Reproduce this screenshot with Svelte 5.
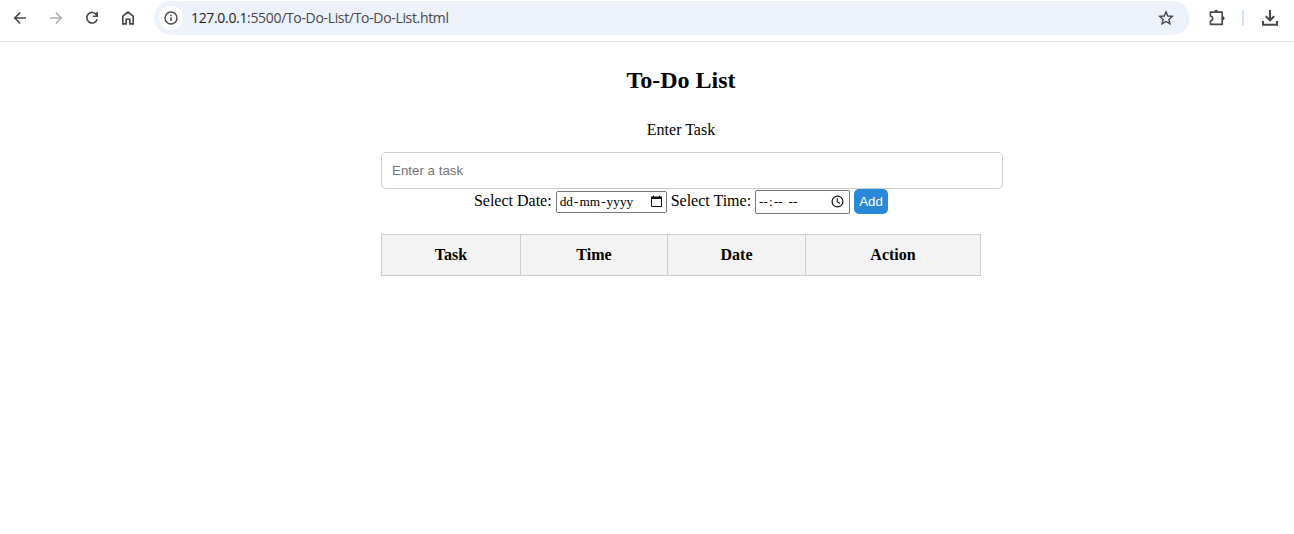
<script>
  const columns = [
    { name: 'Task', width: 139 },
    { name: 'Time', width: 147 },
    { name: 'Date', width: 138 },
    { name: 'Action', width: 175 }
  ];
  let task = $state('');
</script>

<div class="page">
  <header class="toolbar">
    <nav>
      <svg viewBox="0 0 16 16"><path d="M14 8H3M8.2 2.5 2.7 8l5.5 5.5" /></svg>
      <svg class="disabled" viewBox="0 0 16 16"><path d="M2 8h11M7.8 2.5 13.3 8l-5.5 5.5" /></svg>
      <svg viewBox="0 0 16 16"><path d="M12.7 5A5.3 5.3 0 1 0 13.2 9.3M13.2 2v4.2H9" /></svg>
      <svg viewBox="0 0 16 16"><path d="M2.8 6.1 8 2.1l5.2 4v7.8H9.8V9.2H6.2v4.7H2.8Z" /></svg>
    </nav>
    <div class="address">
      <span class="info">
        <svg viewBox="0 0 16 16"><circle cx="8" cy="8" r="6" stroke-width="1.4" /><path d="M8 7.3v3.8M8 4.8v1.5" stroke-width="1.5" /></svg>
      </span>
      <span class="url"><b>127.0.0.1</b>:5500/To-Do-List/To-Do-List.html</span>
      <svg class="star" viewBox="0 0 16 16"><path d="m8 1.9 1.8 4.1 4.5.4-3.4 3 1 4.4L8 11.5l-3.9 2.3 1-4.4-3.4-3 4.5-.4Z" stroke-width="1.4" /></svg>
    </div>
    <svg class="puzzle" viewBox="0 0 18 18"><path d="M2.4 3.1h11.8v12.3H2.4V12c3.1-.5 3.1-4.4 0-5Z" stroke-linejoin="round" /><path d="M6.2 2.7a2 2 0 0 1 4 0ZM14.6 7.3a2 2 0 0 1 0 4Z" fill="#474747" stroke="none" /></svg>
    <span class="divider"></span>
    <svg class="download" viewBox="0 0 18 18"><path d="M9 1v10M4.8 7.2 9 11.4l4.2-4.2M2 12v3.8h14V12" stroke-width="2" /></svg>
  </header>

  <main>
    <h2>To-Do List</h2>
    <label class="task-label" for="task">Enter Task</label>
    <input id="task" type="text" placeholder="Enter a task" bind:value={task} />
    <div class="controls">
      <span class="caption">Select Date:</span>
      <div class="field date">
        <span class="parts"><i>dd</i><u>-</u><i>mm</i><u>-</u><i>yyyy</i></span>
        <svg viewBox="0 0 13 13"><path d="M1.5 2.5h10v9h-10Z" stroke-width="1" /><path d="M1 1.5h11V4H1ZM3 .5h1v1H3ZM9 .5h1v1H9Z" fill="#111" stroke="none" /></svg>
      </div>
      <span class="caption">Select Time:</span>
      <div class="field time">
        <span class="parts"><i>--</i><u>:</u><i>--</i><u class="space"></u><i>--</i></span>
        <svg viewBox="0 0 13 13"><circle cx="6.5" cy="6.5" r="5.4" stroke-width="1.2" /><path d="M6.3 3.2v3.6l2.6 1.7" stroke-width="1.1" /></svg>
      </div>
      <button type="button">Add</button>
    </div>
    <table>
      <thead>
        <tr>
          {#each columns as column}
            <th style="width: {column.width}px">{column.name}</th>
          {/each}
        </tr>
      </thead>
    </table>
  </main>
</div>

<style>
  .page {
    height: 534px;
    overflow: hidden;
    background: #fff;
    color: #000;
    font: 16px/18px "Liberation Serif", "Times New Roman", serif;
  }
  .toolbar {
    box-sizing: border-box;
    height: 42px;
    padding: 1px 15px 6px 12px;
    border-bottom: 1px solid #dfdfdf;
    display: flex;
    align-items: center;
  }
  svg {
    display: block;
    flex: none;
    width: 16px;
    height: 16px;
    fill: none;
    stroke: #474747;
    stroke-width: 1.6;
  }
  .disabled {
    stroke: #b0b0b0;
  }
  nav {
    display: flex;
    gap: 20px;
    width: 142px;
    flex: none;
  }
  .address {
    box-sizing: border-box;
    width: 1036px;
    height: 34px;
    padding: 0 16px 0 5px;
    border-radius: 17px;
    background: #ecf1fa;
    display: flex;
    align-items: center;
  }
  .info {
    width: 24px;
    height: 24px;
    border-radius: 50%;
    background: #fff;
    display: grid;
    place-items: center;
  }
  .url {
    flex: 1;
    margin-left: 8px;
    color: #474747;
    font: 14px/20px "Open Sans", "Noto Sans", sans-serif;
    letter-spacing: -0.33px;
  }
  .url b {
    color: #1f1f1f;
    font-weight: 400;
  }
  .puzzle {
    width: 18px;
    height: 18px;
    margin-left: 18px;
  }
  .divider {
    width: 2px;
    height: 16px;
    margin-left: 16px;
    background: #d3e3fd;
  }
  .download {
    width: 18px;
    height: 18px;
    margin-left: 17px;
  }
  main {
    width: 600px;
    margin-left: 381px;
    padding-top: 24px;
  }
  h2 {
    margin: 0;
    text-align: center;
    font-size: 24px;
    line-height: 28px;
  }
  .task-label {
    display: block;
    margin-top: 27px;
    text-align: center;
  }
  #task {
    box-sizing: border-box;
    display: block;
    width: 622px;
    height: 37px;
    margin: 13px 0 0;
    padding: 0 10px;
    border: 1px solid #ccc;
    border-radius: 5px;
    font: 13.333px "Liberation Sans", Arial, sans-serif;
  }
  #task::placeholder {
    color: #757575;
  }
  .controls {
    height: 25px;
    display: flex;
    justify-content: center;
    align-items: center;
    gap: 4px;
    white-space: nowrap;
  }
  .caption {
    padding-bottom: 1px;
  }
  .field {
    box-sizing: border-box;
    border: 1px solid #767676;
    border-radius: 2px;
    display: flex;
    align-items: center;
    justify-content: space-between;
    font-size: 13.333px;
  }
  .field svg {
    width: 13px;
    height: 13px;
    stroke: #111;
  }
  .date {
    width: 111px;
    height: 22px;
    margin-top: 1px;
    padding: 0 3px 0 2px;
  }
  .date svg {
    margin-bottom: 1px;
  }
  .time {
    width: 95px;
    height: 24px;
    padding: 0 5px 0 2px;
  }
  .parts {
    display: flex;
  }
  .parts i,
  .parts u {
    font-style: normal;
    text-decoration: none;
  }
  .parts i {
    padding: 0 1px;
  }
  .parts .space {
    width: 4px;
  }
  button {
    width: 34px;
    height: 25px;
    padding: 0;
    border: 0;
    border-radius: 5px;
    background: #2a88d8;
    color: #fff;
    font: 13.333px "Liberation Sans", Arial, sans-serif;
  }
  table {
    width: 599px;
    height: 42px;
    margin-top: 20px;
    border-collapse: collapse;
    table-layout: fixed;
  }
  th {
    box-sizing: border-box;
    padding: 0;
    border: 1px solid #ccc;
    background: #f3f3f3;
    text-align: center;
  }
</style>
